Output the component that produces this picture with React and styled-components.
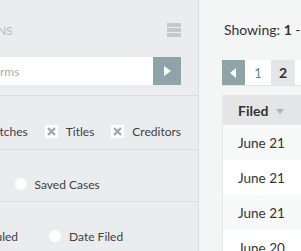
import React from "react";
import styled, { createGlobalStyle } from "styled-components";

const GlobalStyle = createGlobalStyle`
  html, body {
    margin: 0;
    padding: 0;
    overflow: hidden;
  }
  body {
    font-family: "Lato", "Open Sans", sans-serif;
    color: #333333;
  }
  * {
    box-sizing: border-box;
  }
`;

const Page = styled.div`
  display: flex;
  width: 100%;
  height: 251px;
  overflow: hidden;
  background: #f4f5f5;
`;

const Sidebar = styled.aside`
  flex: 0 0 199px;
  display: flex;
  flex-direction: column;
  align-items: flex-end;
  overflow: hidden;
  background: #ebecee;
  border-right: 1px solid #dcdde0;
`;

const SidebarInner = styled.div`
  width: 300px;
  flex: 0 0 auto;
  display: flex;
  flex-direction: column;
`;

const Section = styled.div`
  padding: ${(p) => p.$pad || "28px 17px 11px"};
  border-bottom: ${(p) => (p.$last ? "none" : "1px solid #dcdde0")};
`;

const TitleRow = styled.div`
  display: flex;
  align-items: center;
  justify-content: space-between;
  height: 16px;
`;

const Title = styled.h2`
  margin: 0;
  font-size: 11.5px;
  font-weight: 400;
  letter-spacing: 0;
  text-transform: uppercase;
  color: #b6b8ba;
`;

const MenuButton = styled.button`
  display: flex;
  padding: 0;
  border: 0;
  background: none;
`;

const SearchRow = styled.form`
  display: flex;
  height: 28px;
  margin-top: 19px;
`;

const SearchInput = styled.input`
  flex: 1;
  min-width: 0;
  height: 28px;
  border: 0;
  padding: 0 0 0 6px;
  font-family: inherit;
  font-size: 12px;
  background: #ffffff;
  outline: none;

  &::placeholder {
    color: #a9abad;
  }
`;

const SearchButton = styled.button`
  flex: 0 0 28px;
  display: flex;
  align-items: center;
  justify-content: center;
  border: 0;
  padding: 0;
  background: #8fa4a9;
`;

const OptionRow = styled.div`
  display: flex;
  align-items: center;
  justify-content: ${(p) => (p.$end ? "flex-end" : "flex-start")};
  gap: ${(p) => p.$gap || 17}px;
  height: ${(p) => p.$h || 13}px;
`;

const Option = styled.label`
  display: flex;
  align-items: center;
  gap: 8px;
  font-size: 12px;
  color: #3f4042;
  white-space: nowrap;
`;

const CheckBox = styled.span`
  display: flex;
  align-items: center;
  justify-content: center;
  width: 13px;
  height: 13px;
  background: #ffffff;
`;

const Radio = styled.span`
  width: 12px;
  height: 12px;
  border-radius: 50%;
  background: #ffffff;
`;

const Main = styled.main`
  flex: 1;
  min-width: 0;
  overflow: hidden;
  padding: 20px 0 0 23px;
`;

const Showing = styled.div`
  height: 20px;
  line-height: 20px;
  padding-left: 2px;
  font-size: 14px;
  color: #333333;
  white-space: nowrap;

  b {
    font-weight: 700;
  }
`;

const Pager = styled.div`
  display: flex;
  width: 400px;
  height: 26px;
  margin-top: 20px;
  background: #ffffff;
  border-bottom: 1px solid #e1e3e4;
`;

const PageCell = styled.button`
  flex: 0 0 ${(p) => p.$w || 24}px;
  display: flex;
  align-items: center;
  justify-content: center;
  height: 25px;
  border: 0;
  padding: 0;
  font-family: inherit;
  font-size: ${(p) => (p.$active ? 14 : 13)}px;
  font-weight: ${(p) => (p.$active ? 700 : 400)};
  color: ${(p) => (p.$active ? "#2f3031" : "#5e8790")};
  background: ${(p) => p.$bg || "#ffffff"};
`;

const Table = styled.table`
  width: 500px;
  margin-top: 9px;
  border-collapse: collapse;
  border-left: 1px solid #e4e6e7;
`;

const HeadCell = styled.th`
  height: 30px;
  padding: 0 0 0 15px;
  text-align: left;
  font-size: 14px;
  font-weight: 700;
  color: #333333;
  background: #e3e5e7;
`;

const SortArrow = styled.span`
  display: inline-block;
  margin-left: 8px;
  vertical-align: middle;
  border-left: 4px solid transparent;
  border-right: 4px solid transparent;
  border-top: 5px solid #a8b5b9;
`;

const Row = styled.tr`
  background: ${(p) => (p.$odd ? "#f8f9f9" : "#ffffff")};
`;

const Cell = styled.td`
  height: 35px;
  padding: 0 0 0 15px;
  font-size: 13.5px;
  color: #333333;
`;

const MenuIcon = () => (
  <svg width="14" height="14" viewBox="0 0 14 14">
    <rect x="0" y="0" width="14" height="4" fill="#c6c8ca" />
    <rect x="0" y="5" width="14" height="4" fill="#c6c8ca" />
    <rect x="0" y="10" width="14" height="4" fill="#c6c8ca" />
  </svg>
);

const XMark = () => (
  <svg width="9" height="9" viewBox="0 0 9 9">
    <path d="M1 1 L8 8 M8 1 L1 8" stroke="#99abb0" strokeWidth="2.4" />
  </svg>
);

const Triangle = ({ dir }) => (
  <svg width="7" height="10" viewBox="0 0 7 10">
    {dir === "left" ? (
      <path d="M6 0 L6 10 L0 5 Z" fill="#ffffff" />
    ) : (
      <path d="M0 0 L0 10 L7 5 Z" fill="#ffffff" />
    )}
  </svg>
);

const dates = ["June 21", "June 21", "June 21", "June 20", "June 20"];

const App = () => {
  return (
    <>
      <GlobalStyle />
      <Page>
        <Sidebar>
          <SidebarInner>
            <Section $pad="22px 17px 10px">
              <TitleRow>
                <Title>Search Options</Title>
                <MenuButton aria-label="Menu">
                  <MenuIcon />
                </MenuButton>
              </TitleRow>
              <SearchRow onSubmit={(e) => e.preventDefault()}>
                <SearchInput placeholder="Enter search terms" />
                <SearchButton aria-label="Search">
                  <Triangle dir="right" />
                </SearchButton>
              </SearchRow>
            </Section>
            <Section $pad="29px 17px 11px">
              <OptionRow $end>
                <Option>
                  <CheckBox>
                    <XMark />
                  </CheckBox>
                  Exact Matches
                </Option>
                <Option>
                  <CheckBox>
                    <XMark />
                  </CheckBox>
                  Titles
                </Option>
                <Option>
                  <CheckBox>
                    <XMark />
                  </CheckBox>
                  Creditors
                </Option>
              </OptionRow>
            </Section>
            <Section $pad="28px 17px 11px">
              <OptionRow $h={12} $gap={32}>
                <Option>
                  <Radio />
                  All Cases
                </Option>
                <Option>
                  <Radio />
                  Saved Cases
                </Option>
              </OptionRow>
            </Section>
            <Section $pad="28px 17px 11px" $last>
              <OptionRow $h={12} $gap={31}>
                <Option>
                  <Radio />
                  Date Scheduled
                </Option>
                <Option>
                  <Radio />
                  Date Filed
                </Option>
              </OptionRow>
            </Section>
          </SidebarInner>
        </Sidebar>
        <Main>
          <Showing>
            Showing: <b>1</b> - <b>25</b> of <b>312</b>
          </Showing>
          <Pager>
            <PageCell $w={23} $bg="#8fa4a9" aria-label="Previous">
              <Triangle dir="left" />
            </PageCell>
            <PageCell $w={26}>1</PageCell>
            <PageCell $w={24} $active $bg="#e4e6e8">
              2
            </PageCell>
            <PageCell $w={24}>3</PageCell>
            <PageCell $w={24}>4</PageCell>
          </Pager>
          <Table>
            <thead>
              <tr>
                <HeadCell>
                  Filed
                  <SortArrow />
                </HeadCell>
                <HeadCell>Case Name</HeadCell>
              </tr>
            </thead>
            <tbody>
              {dates.map((d, i) => (
                <Row key={i} $odd={i % 2 === 0}>
                  <Cell>{d}</Cell>
                  <Cell>Case</Cell>
                </Row>
              ))}
            </tbody>
          </Table>
        </Main>
      </Page>
    </>
  );
};

export default App;
